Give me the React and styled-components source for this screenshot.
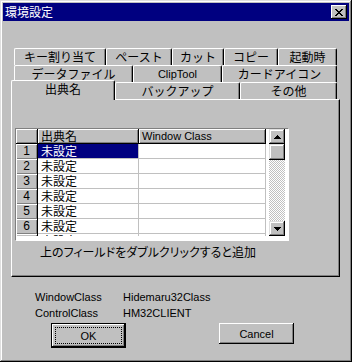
import React from "react";
import styled, { createGlobalStyle } from "styled-components";

const JP = `"Noto Sans CJK JP", sans-serif`;
const LAT = `"Liberation Sans", "Noto Sans CJK JP", sans-serif`;

const Global = createGlobalStyle`
  html, body { margin: 0; padding: 0; background: #c0c0c0; }
  body { font-family: ${LAT}; color: #000; }
`;

const Window = styled.div`
  box-sizing: border-box;
  width: 352px;
  height: 362px;
  padding: 3px;
  background: #c0c0c0;
  box-shadow: inset -1px -1px #000, inset 1px 1px #dfdfdf,
    inset -2px -2px #808080, inset 2px 2px #fff;
  display: flex;
  flex-direction: column;
`;

const TitleBar = styled.div`
  height: 18px;
  flex: none;
  background: #000080;
  display: flex;
  align-items: center;
  justify-content: space-between;
  padding: 0 2px;
`;

const Title = styled.span`
  color: #fff;
  font: 12px/18px ${JP};
`;

const CloseBtn = styled.div`
  box-sizing: border-box;
  width: 16px;
  height: 14px;
  background: #c0c0c0;
  box-shadow: inset -1px -1px #000, inset 1px 1px #fff, inset -2px -2px #808080;
  display: flex;
  align-items: center;
  justify-content: center;
  padding-right: 1px;
`;

const Body = styled.div`
  padding: 27px 9px 0 8px;
  display: flex;
  flex-direction: column;
`;

const TabStrip = styled.div`
  display: flex;
  flex-direction: column;
  padding-left: 3px;
`;

const TabRow = styled.div`
  display: flex;
  height: 17px;
  align-items: flex-start;
`;

const Tab = styled.div`
  box-sizing: border-box;
  flex: none;
  width: ${(p) => p.$w}px;
  height: ${(p) => (p.$sel ? 20 : 17)}px;
  margin: ${(p) => (p.$sel ? "-2px 0 -1px -3px" : "0")};
  position: relative;
  z-index: ${(p) => (p.$sel ? 2 : 1)};
  background: #c0c0c0;
  border-left: 1px solid #fff;
  border-top: 1px solid #fff;
  border-right: 1px solid #000;
  border-radius: 2px 2px 0 0;
  box-shadow: inset -1px 0 #808080;
  font: ${(p) => (p.$latin ? `11px ${LAT}` : `12px ${JP}`)};
  line-height: ${(p) => (p.$sel ? 15 : 16)}px;
  text-align: center;
  white-space: nowrap;
`;

const Panel = styled.div`
  box-sizing: border-box;
  height: 178px;
  background: #c0c0c0;
  border-left: 1px solid #fff;
  border-top: 1px solid #fff;
  border-right: 1px solid #000;
  border-bottom: 1px solid #000;
  box-shadow: inset -1px -1px #808080;
  padding: 28px 0 0 3px;
`;

const GridFrame = styled.div`
  box-sizing: border-box;
  width: 274px;
  height: 113px;
  background: #fff;
  border-top: 1px solid #808080;
  border-left: 1px solid #808080;
  border-right: 1px solid #fff;
  border-bottom: 1px solid #fff;
  display: flex;
  align-items: flex-start;
`;

const Cells = styled.div`
  display: grid;
  grid-template-columns: 22px 101px 127px;
  grid-auto-rows: 15px;
  width: 250px;
  height: 107px;
  overflow: hidden;
  flex: none;
`;

const HeadCell = styled.div`
  box-sizing: border-box;
  background: #c0c0c0;
  border-right: 1px solid #000;
  border-bottom: 1px solid #000;
  box-shadow: inset 1px 1px #fff, inset -1px -1px #808080;
  padding-left: 3px;
  font: ${(p) => (p.$latin ? `11px/14px ${LAT}` : `12px/14px ${JP}`)};
  white-space: nowrap;
  overflow: hidden;
`;

const RowHead = styled.div`
  box-sizing: border-box;
  background: #c0c0c0;
  border-right: 1px solid #000;
  box-shadow: inset 1px 1px #fff, inset -1px -1px #808080;
  font: 12px/15px ${LAT};
  text-align: center;
`;

const DataCell = styled.div`
  box-sizing: border-box;
  background: ${(p) => (p.$sel ? "#000080" : "#fff")};
  color: ${(p) => (p.$sel ? "#fff" : "#000")};
  border-right: 1px solid #c0c0c0;
  border-bottom: 1px solid #c0c0c0;
  padding-left: 3px;
  font: 12px/14px ${JP};
  white-space: nowrap;
`;

const ScrollBar = styled.div`
  flex: none;
  width: 16px;
  height: 107px;
  margin-left: 3px;
  display: flex;
  flex-direction: column;
`;

const ScrollBtn = styled.div`
  box-sizing: border-box;
  flex: none;
  height: ${(p) => p.$h}px;
  background: #c0c0c0;
  box-shadow: inset -1px -1px #000, inset 1px 1px #dfdfdf,
    inset -2px -2px #808080, inset 2px 2px #fff;
  display: flex;
  align-items: center;
  justify-content: center;
`;

const Trough = styled.div`
  flex: 1;
  background-color: #fff;
  background-image: conic-gradient(
    #c0c0c0 25%,
    transparent 0 50%,
    #c0c0c0 0 75%,
    transparent 0
  );
  background-size: 2px 2px;
`;

const Hint = styled.div`
  margin: 4px 0 0 25px;
  font: 12px/14px ${JP};
  font-feature-settings: "palt";
`;

const InfoList = styled.div`
  margin: 12px 0 0 24px;
  display: grid;
  grid-template-columns: 88px auto;
  font: 11px/16px ${LAT};
`;

const ButtonRow = styled.div`
  margin-top: 2px;
  padding-left: 40px;
  display: flex;
  align-items: flex-start;
  gap: 93px;
`;

const Button = styled.div`
  box-sizing: border-box;
  width: 75px;
  height: ${(p) => (p.$default ? 25 : 21)}px;
  background: #c0c0c0;
  display: flex;
  align-items: center;
  justify-content: center;
  font: 11px ${LAT};
  border: ${(p) => (p.$default ? "1px solid #000" : "none")};
  box-shadow: inset -1px -1px #000, inset 1px 1px #fff, inset -2px -2px #808080;
  padding: ${(p) => (p.$default ? "3px" : "0")};
`;

const FocusRing = styled.span`
  box-sizing: border-box;
  flex: 1;
  align-self: stretch;
  border: 1px dotted #000;
  display: flex;
  align-items: center;
  justify-content: center;
`;

const pix = (rows) => {
  let d = "";
  rows.forEach((r, y) => {
    for (let x = 0; x < r.length; x++) if (r[x] === "#") d += `M${x} ${y}h1v1h-1z`;
  });
  return d;
};

const XGlyph = () => (
  <svg width="8" height="7" viewBox="0 0 8 7" shapeRendering="crispEdges">
    <path
      fill="#000"
      d={pix(["##....##", ".##..##.", "..####..", "...##...", "..####..", ".##..##.", "##....##"])}
    />
  </svg>
);

const Arrow = ({ down }) => {
  const rows = ["...#...", "..###..", ".#####.", "#######"];
  return (
    <svg width="7" height="4" viewBox="0 0 7 4" shapeRendering="crispEdges">
      <path fill="#000" d={pix(down ? [...rows].reverse() : rows)} />
    </svg>
  );
};

const tabRows = [
  [
    { t: "キー割り当て", w: 92 },
    { t: "ペースト", w: 66 },
    { t: "カット", w: 52 },
    { t: "コピー", w: 54 },
    { t: "起動時", w: 59 },
  ],
  [
    { t: "データファイル", w: 119 },
    { t: "ClipTool", w: 89, latin: true },
    { t: "カードアイコン", w: 115 },
  ],
  [
    { t: "出典名", w: 104, sel: true },
    { t: "バックアップ", w: 125 },
    { t: "その他", w: 97 },
  ],
];

export default function App() {
  const rows = [1, 2, 3, 4, 5, 6, 7];
  return (
    <>
      <Global />
      <Window>
        <TitleBar>
          <Title>環境設定</Title>
          <CloseBtn>
            <XGlyph />
          </CloseBtn>
        </TitleBar>
        <Body>
          <TabStrip>
            {tabRows.map((row, i) => (
              <TabRow key={i}>
                {row.map((tab) => (
                  <Tab key={tab.t} $w={tab.w} $sel={tab.sel} $latin={tab.latin}>
                    {tab.t}
                  </Tab>
                ))}
              </TabRow>
            ))}
          </TabStrip>
          <Panel>
            <GridFrame>
              <Cells>
                <HeadCell />
                <HeadCell>出典名</HeadCell>
                <HeadCell $latin>Window Class</HeadCell>
                {rows.map((n) => (
                  <React.Fragment key={n}>
                    <RowHead>{n}</RowHead>
                    <DataCell $sel={n === 1}>未設定</DataCell>
                    <DataCell />
                  </React.Fragment>
                ))}
              </Cells>
              <ScrollBar>
                <ScrollBtn $h={15}>
                  <Arrow />
                </ScrollBtn>
                <ScrollBtn $h={16} />
                <Trough />
                <ScrollBtn $h={15}>
                  <Arrow down />
                </ScrollBtn>
              </ScrollBar>
            </GridFrame>
            <Hint>上のフィールドをダブルクリックすると追加</Hint>
          </Panel>
          <InfoList>
            <span>WindowClass</span>
            <span>Hidemaru32Class</span>
            <span>ControlClass</span>
            <span>HM32CLIENT</span>
          </InfoList>
          <ButtonRow>
            <Button $default>
              <FocusRing>OK</FocusRing>
            </Button>
            <Button>Cancel</Button>
          </ButtonRow>
        </Body>
      </Window>
    </>
  );
}
